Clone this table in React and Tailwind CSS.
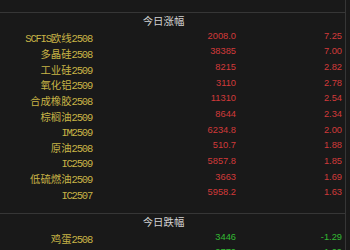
import React from 'react';

const gainers = [
  ['SCFIS欧线2508', '2008.0', '7.25'],
  ['多晶硅2508', '38385', '7.00'],
  ['工业硅2509', '8215', '2.82'],
  ['氧化铝2509', '3110', '2.78'],
  ['合成橡胶2508', '11310', '2.54'],
  ['棕榈油2509', '8644', '2.34'],
  ['IM2509', '6234.8', '2.00'],
  ['原油2508', '510.7', '1.88'],
  ['IC2509', '5857.8', '1.85'],
  ['低硫燃油2509', '3663', '1.69'],
  ['IC2507', '5958.2', '1.63'],
];

const losers = [
  ['鸡蛋2508', '3446', '-1.29'],
  ['菜籽粕2509', '2770', '-1.09'],
];

// split CJK / latin runs so the latin part can be narrower
function Name({ text }) {
  const parts = text.split(/([\u4e00-\u9fff]+)/).filter(Boolean);
  return (
    <span className="inline-flex items-baseline justify-end">
      {parts.map((p, i) =>
        /[\u4e00-\u9fff]/.test(p) ? (
          <span key={i} className="text-[10.4px] [font-family:'Noto_Sans_CJK_SC',sans-serif]">{p}</span>
        ) : (
          <span key={i} className="text-[10.5px] tracking-[-1.2px] [font-family:'Liberation_Mono',monospace]">{p}</span>
        )
      )}
    </span>
  );
}

function Row({ row, up }) {
  const color = up ? 'text-[#d23a3a]' : 'text-[#33bb33]';
  return (
    <div className="flex h-[15.67px] items-center leading-none">
      <div className="w-[92px] text-right text-[#c8b446] whitespace-nowrap">
        <Name text={row[0]} />
      </div>
      <div className={`w-[144px] text-right text-[9.3px] [font-family:'Liberation_Sans',sans-serif] ${color}`}>
        {row[1]}
      </div>
      <div className={`flex-1 pr-[3px] text-right text-[9.3px] [font-family:'Liberation_Sans',sans-serif] ${color}`}>
        {row[2]}
      </div>
    </div>
  );
}

function Section({ title, rows, up }) {
  return (
    <div className="border-t border-[#363636]">
      <div className="flex h-[15.67px] items-center justify-center leading-none">
        <span className="pr-[18px] text-[10.4px] text-[#d2d2d2] [font-family:'Noto_Sans_CJK_SC',sans-serif]">
          {title}
        </span>
      </div>
      {rows.map((r) => (
        <Row key={r[0]} row={r} up={up} />
      ))}
    </div>
  );
}

export default function App() {
  return (
    <div className="h-[250px] w-[350px] overflow-hidden bg-[#191919]">
      <div className="w-[346px] border-r border-[#363636] pt-[12px]">
        <Section title="今日涨幅" rows={gainers} up />
        <div className="h-[12px]" />
        <Section title="今日跌幅" rows={losers} up={false} />
      </div>
    </div>
  );
}
